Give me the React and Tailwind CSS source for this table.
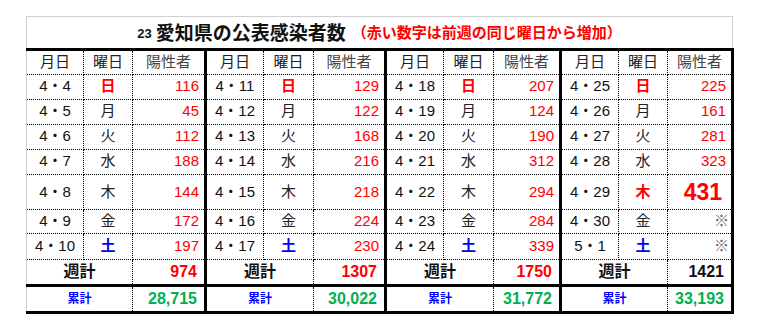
import React from "react";

const groups = [
  { dates: ["4・4","4・5","4・6","4・7","4・8","4・9","4・10"], vals: ["116","45","112","188","144","172","197"], week: "974", weekRed: true, cum: "28,715" },
  { dates: ["4・11","4・12","4・13","4・14","4・15","4・16","4・17"], vals: ["129","122","168","216","218","224","230"], week: "1307", weekRed: true, cum: "30,022" },
  { dates: ["4・18","4・19","4・20","4・21","4・22","4・23","4・24"], vals: ["207","124","190","312","294","284","339"], week: "1750", weekRed: true, cum: "31,772" },
  { dates: ["4・25","4・26","4・27","4・28","4・29","4・30","5・1"], vals: ["225","161","281","323","431","※","※"], week: "1421", weekRed: false, cum: "33,193" },
];
const days = ["日","月","火","水","木","金","土"];
const heights = ["h-[25px]","h-[25px]","h-[25px]","h-[25px]","h-[35px]","h-[24px]","h-[26px]"];

const base = "border border-dotted border-black p-0";
const leftOf = (g) =>
  g === 0
    ? " border-l-[#d0d0d0] [border-left-style:solid]"
    : " border-l-[3px] [border-left-style:solid]";
const rightOf = (g) => (g === 3 ? " border-r-[3px] [border-right-style:solid]" : "");

function dayClass(d, g) {
  if (d === 0) return "text-[#ff0000] font-bold";
  if (d === 6) return "text-[#0000ff] font-bold";
  if (d === 4 && g === 3) return "text-[#ff0000] font-bold";
  return "text-[#222]";
}

export default function App() {
  return (
    <div className="w-[769px] h-[332px] bg-white font-['Liberation_Sans','Noto_Sans_CJK_JP',sans-serif] text-[#111]">
      <div className="pt-[16px] pl-[26px]">
        <div className="w-[707px]">
          <div className="h-[32px] border border-b-0 border-[#d0d0d0] flex items-center justify-center">
            <span className="text-[13px] font-bold mr-[4px] mt-[2px]">23</span>
            <span className="text-[19px] font-bold font-['Noto_Sans_CJK_JP',sans-serif]">愛知県の公表感染者数</span>
            <span className="text-[15px] font-bold text-[#ff0000] font-['Noto_Sans_CJK_JP',sans-serif] ml-[6px]">（赤い数字は前週の同じ曜日から増加）</span>
          </div>
          <table className="table-fixed border-collapse w-[707px]">
            <colgroup>
              <col className="w-[57px]" /><col className="w-[49px]" /><col className="w-[73px]" />
              <col className="w-[58px]" /><col className="w-[50px]" /><col className="w-[72px]" />
              <col className="w-[58px]" /><col className="w-[50px]" /><col className="w-[67px]" />
              <col className="w-[58px]" /><col className="w-[49px]" /><col className="w-[65px]" />
            </colgroup>
            <tbody>
              <tr className="h-[23px]">
                {groups.map((_, g) => (
                  <React.Fragment key={g}>
                    <td className={base + " border-t-[3px] [border-top-style:solid] text-center text-[15px] text-[#222]" + leftOf(g)}>月日</td>
                    <td className={base + " border-t-[3px] [border-top-style:solid] text-center text-[15px] text-[#222]"}>曜日</td>
                    <td className={base + " border-t-[3px] [border-top-style:solid] text-center text-[15px] text-[#444]" + rightOf(g)}>陽性者</td>
                  </React.Fragment>
                ))}
              </tr>
              {days.map((day, d) => (
                <tr key={d} className={heights[d]}>
                  {groups.map((gr, g) => {
                    const v = gr.vals[d];
                    const big = v === "431";
                    const star = v === "※";
                    return (
                      <React.Fragment key={g}>
                        <td className={base + " text-center text-[15px] text-[#111]" + leftOf(g)}>{gr.dates[d]}</td>
                        <td className={base + " text-center text-[15px] " + dayClass(d, g)}>{day}</td>
                        <td
                          className={
                            base +
                            rightOf(g) +
                            (big
                              ? " text-right pr-[9px] text-[23px] font-bold text-[#ff0000]"
                              : star
                              ? " text-right pr-[2px] text-[15px] text-[#666]"
                              : " text-right pr-[5px] text-[15px] text-[#ff0000]")
                          }
                        >
                          {v}
                        </td>
                      </React.Fragment>
                    );
                  })}
                </tr>
              ))}
              <tr className="h-[26px]">
                {groups.map((gr, g) => (
                  <React.Fragment key={g}>
                    <td colSpan={2} className={base + " text-center text-[16px] font-bold" + leftOf(g)}>週計</td>
                    <td className={base + " text-right pr-[7px] text-[16px] font-bold " + (gr.weekRed ? "text-[#ff0000]" : "text-[#111]") + rightOf(g)}>{gr.week}</td>
                  </React.Fragment>
                ))}
              </tr>
              <tr className="h-[23px]">
                {groups.map((gr, g) => (
                  <React.Fragment key={g}>
                    <td colSpan={2} className={base + " border-t-[3px] border-b-[3px] [border-top-style:solid] [border-bottom-style:solid] text-center text-[12px] font-bold text-[#0000ff]" + leftOf(g)}>累計</td>
                    <td className={base + " border-t-[3px] border-b-[3px] [border-top-style:solid] [border-bottom-style:solid] text-right pr-[7px] text-[16px] font-bold text-[#00b050]" + rightOf(g)}>{gr.cum}</td>
                  </React.Fragment>
                ))}
              </tr>
            </tbody>
          </table>
        </div>
      </div>
    </div>
  );
}
